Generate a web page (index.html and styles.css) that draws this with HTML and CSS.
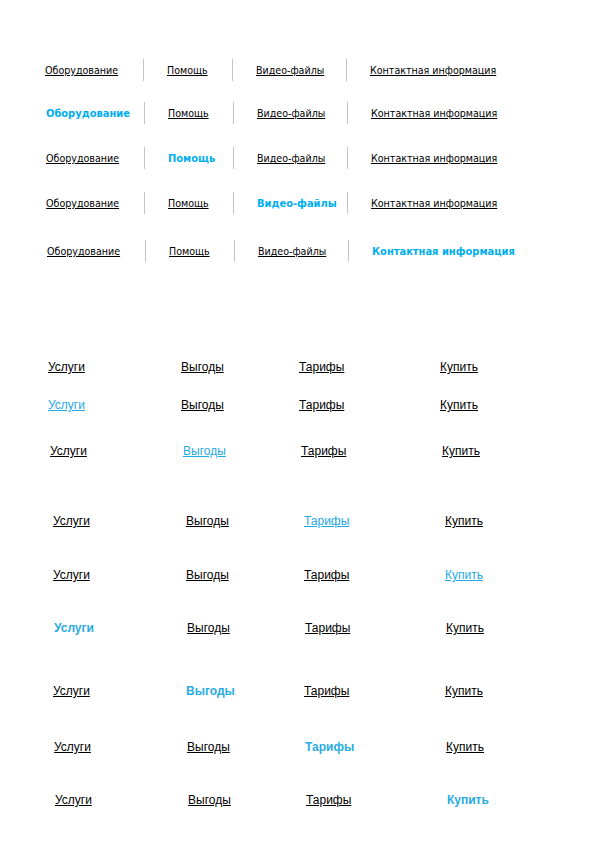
FILE: index.html
```html
<!DOCTYPE html>
<html lang="ru">
<head>
<meta charset="utf-8">
<title>Меню</title>
<link rel="stylesheet" href="styles.css">
</head>
<body>
<section class="tabs">
  <nav class="tab-row t1">
    <a class="tab c1" href="#">Оборудование</a>
    <a class="tab c2" href="#">Помощь</a>
    <a class="tab c3" href="#">Видео-файлы</a>
    <a class="tab c4" href="#">Контактная информация</a>
  </nav>
  <nav class="tab-row t2">
    <a class="tab c1 active" href="#">Оборудование</a>
    <a class="tab c2" href="#">Помощь</a>
    <a class="tab c3" href="#">Видео-файлы</a>
    <a class="tab c4" href="#">Контактная информация</a>
  </nav>
  <nav class="tab-row t3">
    <a class="tab c1" href="#">Оборудование</a>
    <a class="tab c2 active" href="#">Помощь</a>
    <a class="tab c3" href="#">Видео-файлы</a>
    <a class="tab c4" href="#">Контактная информация</a>
  </nav>
  <nav class="tab-row t4">
    <a class="tab c1" href="#">Оборудование</a>
    <a class="tab c2" href="#">Помощь</a>
    <a class="tab c3 active" href="#">Видео-файлы</a>
    <a class="tab c4" href="#">Контактная информация</a>
  </nav>
  <nav class="tab-row t5">
    <a class="tab c1" href="#">Оборудование</a>
    <a class="tab c2" href="#">Помощь</a>
    <a class="tab c3" href="#">Видео-файлы</a>
    <a class="tab c4 active" href="#">Контактная информация</a>
  </nav>
</section>

<section class="links">
  <nav class="link-row m1">
    <a href="#">Услуги</a><a href="#">Выгоды</a><a href="#">Тарифы</a><a href="#">Купить</a>
  </nav>
  <nav class="link-row m2">
    <a class="hover" href="#">Услуги</a><a href="#">Выгоды</a><a href="#">Тарифы</a><a href="#">Купить</a>
  </nav>
  <nav class="link-row m3">
    <a href="#">Услуги</a><a class="hover" href="#">Выгоды</a><a href="#">Тарифы</a><a href="#">Купить</a>
  </nav>
  <nav class="link-row m4">
    <a href="#">Услуги</a><a href="#">Выгоды</a><a class="hover" href="#">Тарифы</a><a href="#">Купить</a>
  </nav>
  <nav class="link-row m5">
    <a href="#">Услуги</a><a href="#">Выгоды</a><a href="#">Тарифы</a><a class="hover" href="#">Купить</a>
  </nav>
  <nav class="link-row m6">
    <a class="current" href="#">Услуги</a><a href="#">Выгоды</a><a href="#">Тарифы</a><a href="#">Купить</a>
  </nav>
  <nav class="link-row m7">
    <a href="#">Услуги</a><a class="current" href="#">Выгоды</a><a href="#">Тарифы</a><a href="#">Купить</a>
  </nav>
  <nav class="link-row m8">
    <a href="#">Услуги</a><a href="#">Выгоды</a><a class="current" href="#">Тарифы</a><a href="#">Купить</a>
  </nav>
  <nav class="link-row m9">
    <a href="#">Услуги</a><a href="#">Выгоды</a><a href="#">Тарифы</a><a class="current" href="#">Купить</a>
  </nav>
</section>
</body>
</html>
```

FILE: styles.css
```css
html, body {
  margin: 0;
  padding: 0;
  background: #ffffff;
}

body {
  width: 595px;
  height: 842px;
  overflow: hidden;
}

/* ---------- top tab menus ---------- */
.tabs {
  display: flex;
  flex-direction: column;
  padding-top: 59px;
}

.tab-row {
  display: flex;
  align-items: center;
  height: 22px;
  padding-left: 45px;
}

.t2 { margin-top: 21px; padding-left: 46px; }
.t3 { margin-top: 23px; padding-left: 46px; }
.t4 { margin-top: 23px; padding-left: 46px; }
.t5 { margin-top: 26px; padding-left: 47px; }

.tab {
  display: flex;
  align-items: center;
  height: 22px;
  box-sizing: border-box;
  font-family: "DejaVu Sans Condensed", "DejaVu Sans", sans-serif;
  font-size: 10.6px;
  color: #000000;
  text-decoration: underline;
  white-space: nowrap;
}

.c1 { width: 98px; }
.c2, .c3, .c4 {
  border-left: 1px solid #c4c4c4;
  padding-left: 23px;
}
.c2 { width: 89px; }
.c3 { width: 114px; }
.c4 { width: auto; }

.tab.active {
  color: #00aeef;
  font-size: 11px;
  font-weight: bold;
  text-decoration: none;
}

/* ---------- bottom link menus ---------- */
.links {
  display: flex;
  flex-direction: column;
}

.link-row {
  display: grid;
  grid-template-columns: 133px 118px 141px auto;
  height: 16px;
  align-items: center;
}

.link-row a {
  font-family: "Liberation Sans", Arial, sans-serif;
  font-size: 12px;
  line-height: 16px;
  color: #000000;
  text-decoration: underline;
  justify-self: start;
}

.link-row a.hover {
  color: #1fa9e6;
}

.link-row a.current {
  color: #29abe2;
  font-weight: bold;
  text-decoration: none;
}

.m1 { margin-top: 97px; padding-left: 48px; }
.m2 { margin-top: 22px; padding-left: 48px; }
.m3 { margin-top: 30px; padding-left: 50px; }
.m4 { margin-top: 54px; padding-left: 53px; }
.m5 { margin-top: 38px; padding-left: 53px; }
.m6 { margin-top: 37px; padding-left: 54px; }
.m7 { margin-top: 47px; padding-left: 53px; }
.m8 { margin-top: 40px; padding-left: 54px; }
.m9 { margin-top: 37px; padding-left: 55px; }
```
